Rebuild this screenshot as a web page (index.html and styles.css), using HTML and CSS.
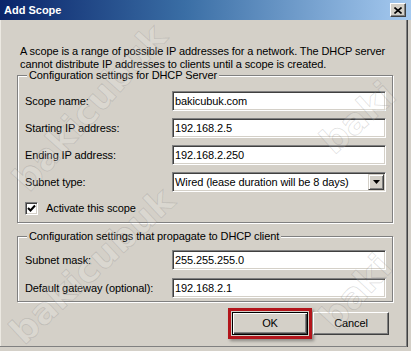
FILE: index.html
```html
<!DOCTYPE html>
<html lang="en">
<head>
  <meta charset="UTF-8" />
  <title>Add Scope</title>
  <link rel="stylesheet" href="styles.css">
</head>
<body>
  <div class="dialog">
    <div class="titlebar">
      <span class="title">Add Scope</span>
      <span class="close-btn">
        <svg width="8" height="7" viewBox="0 0 8 7"><path d="M0.5 0.5 L7.5 6.5 M7.5 0.5 L0.5 6.5" stroke="#000" stroke-width="1.6"/></svg>
      </span>
    </div>

    <div class="content">
      <p class="intro">A scope is a range of possible IP addresses for a network. The DHCP server<br>cannot distribute IP addresses to clients until a scope is created.</p>

      <div class="group">
        <span class="group-title">Configuration settings for DHCP Server</span>
        <div class="rows">
          <div class="row"><label>Scope name:</label><div class="field">bakicubuk.com</div></div>
          <div class="row"><label>Starting IP address:</label><div class="field">192.168.2.5</div></div>
          <div class="row"><label>Ending IP address:</label><div class="field">192.168.2.250</div></div>
          <div class="row">
            <label>Subnet type:</label>
            <div class="field select">
              <span>Wired (lease duration will be 8 days)</span>
              <span class="drop-btn"><svg width="7" height="4" viewBox="0 0 7 4"><path d="M0 0 H7 L3.5 4 Z" fill="#000"/></svg></span>
            </div>
          </div>
        </div>
        <div class="check-row">
          <span class="checkbox">
            <svg width="9" height="9" viewBox="0 0 9 9"><path d="M1 4 L3.5 6.5 L8 1.5" fill="none" stroke="#000" stroke-width="2"/></svg>
          </span>
          <span>Activate this scope</span>
        </div>
      </div>

      <div class="group group-client">
        <span class="group-title">Configuration settings that propagate to DHCP client</span>
        <div class="rows">
          <div class="row"><label>Subnet mask:</label><div class="field">255.255.255.0</div></div>
          <div class="row"><label>Default gateway (optional):</label><div class="field">192.168.2.1</div></div>
        </div>
      </div>

      <div class="buttons">
        <span class="highlight"><span class="btn btn-default">OK</span></span>
        <span class="btn">Cancel</span>
      </div>
    </div>

    <span class="mark mark-1">bakicubuk</span>
    <span class="mark mark-2">bakicubuk</span>
    <span class="mark mark-3">baki</span>
    <span class="mark mark-4">baki</span>
  </div>
</body>
</html>
```

FILE: styles.css
```css
:root {
  --face: #d4d0c8;
  --shadow: #808080;
  --dark: #404040;
  --light: #fff;
}
* { box-sizing: border-box; }
html, body { margin: 0; padding: 0; }
body {
  background: var(--face);
  font-family: "Liberation Sans", Tahoma, Arial, sans-serif;
  font-size: 11px;
  line-height: 13px;
  letter-spacing: -0.1px;
  color: #000;
}
.dialog {
  position: relative;
  width: 411px;
  height: 351px;
  overflow: hidden;
  background: var(--face);
  box-shadow:
    inset -3px -4px 0 var(--face),
    inset -4px -4px 0 var(--dark),
    inset -5px -5px 0 var(--shadow),
    inset 1px 0 0 #ece9e2;
}

/* title bar */
.titlebar {
  height: 20px;
  display: flex;
  align-items: center;
  justify-content: space-between;
  padding: 0 5px 0 4px;
  background: linear-gradient(90deg, #0a246a 0%, #3a6ea5 45%, #a6caf0 100%);
}
.title {
  color: #fff;
  font-weight: bold;
  font-size: 11px;
  letter-spacing: 0;
  margin-top: 1px;
}
.close-btn {
  width: 16px;
  height: 14px;
  display: flex;
  align-items: center;
  justify-content: center;
  background: var(--face);
  border: 1px solid;
  border-color: var(--light) var(--dark) var(--dark) var(--light);
  box-shadow: inset -1px -1px 0 var(--shadow);
}

/* body */
.content {
  padding: 0 0 0 17px;
}
.intro {
  margin: 25px 0 0 3px;
}

.group {
  width: 376px;
  margin-top: 4px;
  border: 1px solid var(--shadow);
  box-shadow: inset 1px 1px 0 var(--light), 1px 1px 0 var(--light);
  padding: 0 6px 7px 7px;
}
.group-title {
  display: block;
  width: fit-content;
  margin: -7px 0 0 2px;
  padding: 0 2px;
  background: var(--face);
}
.rows {
  display: flex;
  flex-direction: column;
  gap: 7px;
  margin-top: 9px;
}
.row {
  display: flex;
  align-items: center;
}
.row label {
  width: 147px;
  flex: none;
}
.field {
  width: 214px;
  height: 20px;
  display: flex;
  align-items: center;
  padding-left: 2px;
  background: #fff;
  border: 1px solid;
  border-color: var(--shadow) var(--light) var(--light) var(--shadow);
  box-shadow: inset 1px 1px 0 var(--dark), inset -1px -1px 0 var(--face);
  white-space: nowrap;
}
.select {
  justify-content: space-between;
  padding-right: 1px;
}
.drop-btn {
  width: 16px;
  height: 16px;
  display: flex;
  align-items: center;
  justify-content: center;
  background: var(--face);
  border: 1px solid;
  border-color: var(--face) var(--dark) var(--dark) var(--face);
  box-shadow: inset 1px 1px 0 var(--light), inset -1px -1px 0 var(--shadow);
}

.check-row {
  display: flex;
  align-items: center;
  gap: 8px;
  margin-top: 10px;
}
.checkbox {
  width: 13px;
  height: 13px;
  display: flex;
  align-items: center;
  justify-content: center;
  background: #fff;
  border: 1px solid;
  border-color: var(--shadow) var(--light) var(--light) var(--shadow);
  box-shadow: inset 1px 1px 0 var(--dark), inset -1px -1px 0 var(--face);
}

.group-client {
  margin-top: 13px;
  padding-bottom: 3px;
}
.group-client .rows { gap: 8px; margin-top: 7px; }

/* buttons */
.buttons {
  width: 376px;
  display: flex;
  justify-content: flex-end;
  align-items: center;
  gap: 1px;
  padding-right: 4px;
  margin-top: 6px;
}
.btn {
  width: 76px;
  height: 23px;
  display: flex;
  align-items: center;
  justify-content: center;
  background: var(--face);
  border: 1px solid;
  border-color: var(--light) var(--dark) var(--dark) var(--light);
  box-shadow: inset -1px -1px 0 var(--shadow);
}
.btn-default {
  border: 1px solid #000;
  box-shadow: inset 1px 1px 0 var(--light), inset -1px -1px 0 var(--dark), inset -2px -2px 0 var(--shadow);
}
.highlight {
  display: block;
  padding: 1px;
  border: 3px solid #b3151b;
  box-shadow: 2px 2px 3px rgba(0, 0, 0, 0.35);
}

/* faint embossed watermark over the screenshot */
.mark {
  position: absolute;
  font-family: "DejaVu Sans", sans-serif;
  font-weight: bold;
  font-size: 36px;
  line-height: 36px;
  letter-spacing: 0;
  color: rgba(255, 255, 255, 0.18);
  -webkit-text-stroke: 0.8px rgba(110, 110, 110, 0.22);
  white-space: nowrap;
  pointer-events: none;
}
.mark-1 { left: 90px; top: 108px; transform: translate(-50%, -50%) rotate(-48deg); }
.mark-2 { left: 92px; top: 266px; transform: translate(-50%, -50%) rotate(-43deg); }
.mark-3 { left: 358px; top: 118px; transform: translate(-50%, -50%) rotate(-42deg); }
.mark-4 { left: 356px; top: 292px; transform: translate(-50%, -50%) rotate(-47deg); }
```
